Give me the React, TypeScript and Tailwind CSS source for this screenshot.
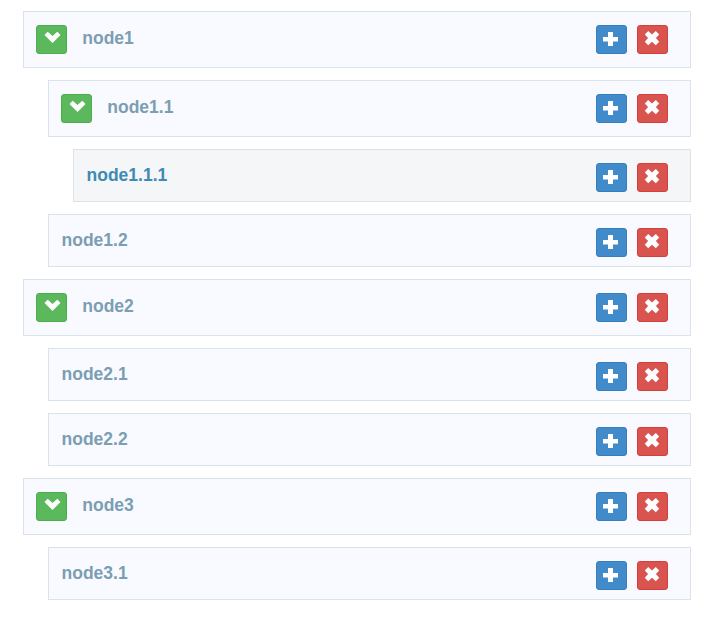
import React from "react";

type TreeNode = { name: string; active?: boolean; children?: TreeNode[] };

const tree: TreeNode[] = [
  {
    name: "node1",
    children: [
      { name: "node1.1", children: [{ name: "node1.1.1", active: true }] },
      { name: "node1.2" },
    ],
  },
  { name: "node2", children: [{ name: "node2.1" }, { name: "node2.2" }] },
  { name: "node3", children: [{ name: "node3.1" }] },
];

const buttonStyles = {
  toggle: "bg-[#5cb85c] border-[#4cae4c]",
  add: "bg-[#428bca] border-[#357ebd]",
  remove: "bg-[#d9534f] border-[#d43f3a]",
};

const icons = {
  toggle: "M11.7 6.8 L16.5 11 L21.3 6.8 L24.5 10 L16.5 18 L8.5 10 Z",
  add: "M12 7 H17 V12 H22 V16.4 H17 V21 H12 V16.4 H7 V12 H12 Z",
  remove:
    "M11.2 6 L15 9.4 L18.8 6 L22.2 9.4 L18.9 13.1 L22.2 16.8 L18.8 20.2 L15 16.8 L11.2 20.2 L7.8 16.8 L11.1 13.1 L7.8 9.4 Z",
};

function IconButton({ kind, label }: { kind: keyof typeof icons; label: string }) {
  return (
    <button aria-label={label} className={`h-[29px] w-[31px] shrink-0 rounded-[3px] border ${buttonStyles[kind]}`}>
      <svg viewBox="1 1 29 27" className="block h-[27px] w-[29px]" fill="#fff">
        <path d={icons[kind]} />
      </svg>
    </button>
  );
}

function Node({ node }: { node: TreeNode }) {
  const parent = !!node.children;
  return (
    <li className="flex flex-col gap-3">
      <div
        className={`flex items-start border pt-[13px] pr-[22px] pl-3 ${parent ? "h-[57px]" : "h-[53px]"} ${
          node.active ? "border-[#dce2e8] bg-[#f4f6f7] text-[#3f8ab5]" : "border-[#dae2ea] bg-[#f8faff] text-[#7c9eb2]"
        }`}
      >
        {parent && (
          <div className="mr-[15px] flex">
            <IconButton kind="toggle" label="Toggle" />
          </div>
        )}
        <span className={`text-[17.5px] leading-5 font-bold ${parent ? "mt-[3px] pl-[0.3px]" : "mt-0.5 pl-[0.5px]"}`}>{node.name}</span>
        <div className="ml-auto flex gap-2.5">
          <IconButton kind="add" label="Add" />
          <IconButton kind="remove" label="Remove" />
        </div>
      </div>
      {node.children && (
        <ul className="flex flex-col gap-3 pl-[25px]">
          {node.children.map((c) => (
            <Node key={c.name} node={c} />
          ))}
        </ul>
      )}
    </li>
  );
}

export default function App() {
  return (
    <main className="min-h-[628px] bg-white pt-[11px] pr-[18px] pl-[23px] font-['Liberation_Sans',Arial,sans-serif]">
      <ul className="flex flex-col gap-3">
        {tree.map((n) => (
          <Node key={n.name} node={n} />
        ))}
      </ul>
    </main>
  );
}
